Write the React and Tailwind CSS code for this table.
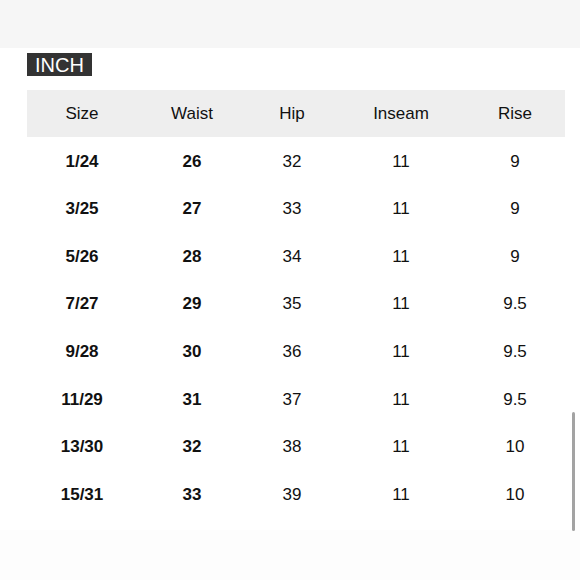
const rows = [
  ["1/24", "26", "32", "11", "9"],
  ["3/25", "27", "33", "11", "9"],
  ["5/26", "28", "34", "11", "9"],
  ["7/27", "29", "35", "11", "9.5"],
  ["9/28", "30", "36", "11", "9.5"],
  ["11/29", "31", "37", "11", "9.5"],
  ["13/30", "32", "38", "11", "10"],
  ["15/31", "33", "39", "11", "10"],
];

const cols = "grid grid-cols-[110px_110px_90px_128px_100px]";

export default function App() {
  return (
    <div
      className="relative w-[580px] h-[580px] bg-white overflow-hidden text-[#111]"
      style={{ fontFamily: '"Liberation Sans", Arial, sans-serif' }}
    >
      <div className="h-[48px] bg-[#f6f6f6]" />
      <div className="pl-[27px] pr-[15px]">
        <div className="mt-[5px] inline-flex h-[23px] items-center bg-[#333] px-[8px] text-[20px] leading-none text-white">
          INCH
        </div>
        <div className={`${cols} mt-[11px] h-[47px] items-center bg-[#eeeeee] text-[17px]`}>
          {["Size", "Waist", "Hip", "Inseam", "Rise"].map((h) => (
            <div key={h} className="pt-[2px] text-center">
              {h}
            </div>
          ))}
        </div>
        {rows.map((r) => (
          <div key={r[0]} className={`${cols} h-[47.6px] items-center text-[17px]`}>
            {r.map((v, i) => (
              <div key={i} className={`pt-[2px] text-center ${i < 2 ? "font-bold" : ""}`}>
                {v}
              </div>
            ))}
          </div>
        ))}
      </div>
      <div className="absolute left-0 right-0 bottom-0 h-[50px] bg-[#fdfdfd]" />
      <div className="absolute left-[572px] top-[412px] h-[119px] w-[3px] rounded-full bg-[#a3a3a3]" />
    </div>
  );
}
